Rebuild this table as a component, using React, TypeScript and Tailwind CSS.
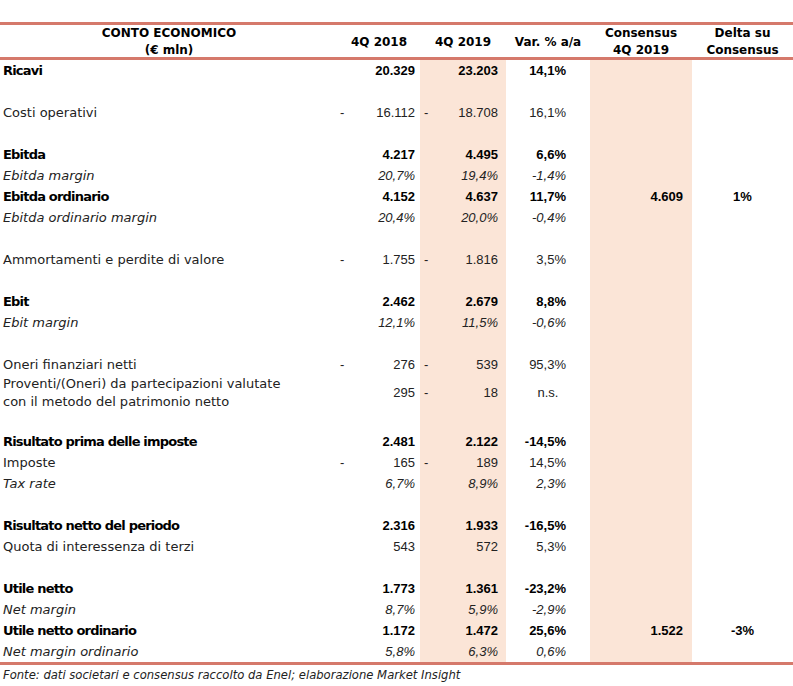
type Row = {
  label?: string;
  label2?: string;
  kind?: "bold" | "italic" | "plain";
  a?: string;
  aDash?: boolean;
  b?: string;
  bDash?: boolean;
  v?: string;
  c?: string;
  d?: string;
};

const rows: Row[] = [
  { label: "Ricavi", kind: "bold", a: "20.329", b: "23.203", v: "14,1%" },
  {},
  { label: "Costi operativi", a: "16.112", aDash: true, b: "18.708", bDash: true, v: "16,1%" },
  {},
  { label: "Ebitda", kind: "bold", a: "4.217", b: "4.495", v: "6,6%" },
  { label: "Ebitda margin", kind: "italic", a: "20,7%", b: "19,4%", v: "-1,4%" },
  { label: "Ebitda ordinario", kind: "bold", a: "4.152", b: "4.637", v: "11,7%", c: "4.609", d: "1%" },
  { label: "Ebitda ordinario margin", kind: "italic", a: "20,4%", b: "20,0%", v: "-0,4%" },
  {},
  { label: "Ammortamenti e perdite di valore", a: "1.755", aDash: true, b: "1.816", bDash: true, v: "3,5%" },
  {},
  { label: "Ebit", kind: "bold", a: "2.462", b: "2.679", v: "8,8%" },
  { label: "Ebit margin", kind: "italic", a: "12,1%", b: "11,5%", v: "-0,6%" },
  {},
  { label: "Oneri finanziari netti", a: "276", aDash: true, b: "539", bDash: true, v: "95,3%" },
  {
    label: "Proventi/(Oneri) da partecipazioni valutate",
    label2: "con il metodo del patrimonio netto",
    a: "295",
    b: "18",
    bDash: true,
    v: "n.s.",
  },
  {},
  { label: "Risultato prima delle imposte", kind: "bold", a: "2.481", b: "2.122", v: "-14,5%" },
  { label: "Imposte", a: "165", aDash: true, b: "189", bDash: true, v: "14,5%" },
  { label: "Tax rate", kind: "italic", a: "6,7%", b: "8,9%", v: "2,3%" },
  {},
  { label: "Risultato netto del periodo", kind: "bold", a: "2.316", b: "1.933", v: "-16,5%" },
  { label: "Quota di interessenza di terzi", a: "543", b: "572", v: "5,3%" },
  {},
  { label: "Utile netto", kind: "bold", a: "1.773", b: "1.361", v: "-23,2%" },
  { label: "Net margin", kind: "italic", a: "8,7%", b: "5,9%", v: "-2,9%" },
  { label: "Utile netto ordinario", kind: "bold", a: "1.172", b: "1.472", v: "25,6%", c: "1.522", d: "-3%" },
  { label: "Net margin ordinario", kind: "italic", a: "5,8%", b: "6,3%", v: "0,6%" },
];

const cols = "grid grid-cols-[338px_82px_86px_84px_102px_101px]";
const num = "font-['Liberation_Sans',Arial,sans-serif]";

function TableRow({ r }: { r: Row }) {
  const tall = !!r.label2;
  const style =
    r.kind === "bold"
      ? "font-bold text-black"
      : r.kind === "italic"
        ? "italic text-[#222]"
        : "text-[#222]";
  const h = tall ? "h-[35px]" : "h-[21px]";
  return (
    <div className={`${cols} ${h} text-[13px] ${style}`}>
      <div
        className={`flex flex-col justify-center pl-[3px] leading-[18px] whitespace-nowrap ${r.kind === "bold" ? "tracking-[-0.8px]" : ""}`}
      >
        <span>{r.label}</span>
        {r.label2 && <span>{r.label2}</span>}
      </div>
      <div className={`flex items-center justify-between pl-[2px] pr-[5px] ${num}`}>
        <span>{r.aDash ? "-" : ""}</span>
        <span>{r.a}</span>
      </div>
      <div className={`flex items-center justify-between bg-[#fbe5d7] pl-[4px] pr-[8px] ${num}`}>
        <span>{r.bDash ? "-" : ""}</span>
        <span>{r.b}</span>
      </div>
      <div
        className={`flex items-center ${num} ${r.v === "n.s." ? "justify-center" : "justify-end pr-[24px]"}`}
      >
        {r.v}
      </div>
      <div className={`flex items-center justify-end bg-[#fbe5d7] pr-[9px] ${num}`}>{r.c}</div>
      <div className={`flex items-center justify-center ${num}`}>{r.d}</div>
    </div>
  );
}

export default function App() {
  return (
    <div className="w-[793px] h-[686px] bg-white pt-[22px] overflow-hidden font-['DejaVu_Sans',sans-serif]">
      <div className={`${cols} h-[38px] border-y-[3px] border-[#d5796b] text-[12px] font-bold text-black leading-[17px]`}>
        <div className="flex flex-col items-center justify-center">
          <span>CONTO ECONOMICO</span>
          <span>(€ mln)</span>
        </div>
        <div className="flex items-center justify-center">4Q 2018</div>
        <div className="flex items-center justify-center">4Q 2019</div>
        <div className="flex items-center justify-center">Var. % a/a</div>
        <div className="flex flex-col items-center justify-center">
          <span>Consensus</span>
          <span>4Q 2019</span>
        </div>
        <div className="flex flex-col items-center justify-center">
          <span>Delta su</span>
          <span>Consensus</span>
        </div>
      </div>
      {rows.map((r, i) => (
        <TableRow key={i} r={r} />
      ))}
      <div className="border-t-[3px] border-[#d5796b] pl-[3px] pt-[2px] text-[11.6px] italic text-[#222]">
        Fonte: dati societari e consensus raccolto da Enel; elaborazione Market Insight
      </div>
    </div>
  );
}
